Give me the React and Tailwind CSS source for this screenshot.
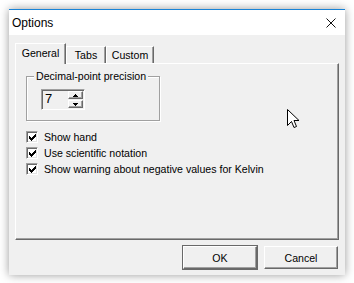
import { useState } from 'react'

// Classic "Options" dialog: title bar, tab strip, one tab page, OK/Cancel.

const raised =
  'border border-t-white border-l-white border-r-[#696969] border-b-[#696969] shadow-[inset_-1px_-1px_0_#a0a0a0]'

function CloseGlyph() {
  return (
    <svg width="10" height="10" viewBox="0 0 10 10" className="block">
      <path d="M0.5 0.5 L9.5 9.5 M9.5 0.5 L0.5 9.5" stroke="#111" strokeWidth="1" fill="none" />
    </svg>
  )
}

function Tab({ label, width, active, onClick }) {
  if (active) {
    return (
      <div
        onClick={onClick}
        className="relative z-10 -mb-px h-[21px] bg-[#f0f0f0] border-t border-l border-r border-t-white border-l-white border-r-[#696969] shadow-[inset_-1px_0_0_#a0a0a0] flex justify-center pt-[2px]"
        style={{ width }}
      >
        {label}
      </div>
    )
  }
  return (
    <div
      onClick={onClick}
      className="h-[17px] bg-[#f0f0f0] border-t border-l border-r border-t-white border-l-white border-r-[#696969] shadow-[inset_-1px_0_0_#a0a0a0] flex justify-center pt-[1px] cursor-default"
      style={{ width }}
    >
      {label}
    </div>
  )
}

// classic 7x7 tick, three pixels tall per column
const TICK = [
  [0, 2], [1, 3], [2, 4], [3, 3], [4, 2], [5, 1], [6, 0],
]

function CheckBox({ label, checked, onToggle }) {
  return (
    <div className="h-[16px] flex items-center gap-[6px]" onClick={onToggle}>
      <div className="w-[12px] h-[12px] bg-white border border-t-[#a0a0a0] border-l-[#a0a0a0] border-r-white border-b-white shadow-[inset_1px_1px_0_#696969,inset_-1px_-1px_0_#e3e3e3] flex items-center justify-center pl-px pt-px">
        {checked && (
          <svg width="7" height="7" viewBox="0 0 7 7" className="block">
            {TICK.map(([x, y]) => (
              <rect key={x} x={x} y={y} width="1" height="3" fill="#000" />
            ))}
          </svg>
        )}
      </div>
      <span>{label}</span>
    </div>
  )
}

function Spinner({ value }) {
  return (
    <div className="w-[44px] h-[21px] bg-[#f0f0f0] border border-t-[#a0a0a0] border-l-[#a0a0a0] border-r-white border-b-white shadow-[inset_1px_1px_0_#696969] flex">
      <div className="flex-1 pl-[3px] pt-[1px] text-[13px] leading-[16px]">{value}</div>
      <div className="w-[16px] flex flex-col pr-[1px] py-px gap-px">
        <div className={`h-[9px] bg-[#f0f0f0] ${raised} flex items-center justify-center`}>
          <svg width="5" height="3" viewBox="0 0 5 3" className="block">
            <path d="M2 0h1v1h1v1h1v1H0V2h1V1h1z" fill="#000" />
          </svg>
        </div>
        <div className={`h-[9px] bg-[#f0f0f0] ${raised} flex items-center justify-center`}>
          <svg width="5" height="3" viewBox="0 0 5 3" className="block">
            <path d="M0 0h5v1H4v1H3v1H2V2H1V1H0z" fill="#000" />
          </svg>
        </div>
      </div>
    </div>
  )
}

function Cursor() {
  return (
    <svg
      width="13"
      height="20"
      viewBox="0 0 13 20"
      className="absolute left-[287px] top-[109px]"
    >
      <path
        d="M0.5 0.5 L0.5 16.5 L4.5 12.5 L7 18.5 L9.5 17.5 L7 11.5 L12 11.5 Z"
        fill="#fff"
        stroke="#000"
        strokeWidth="1"
      />
    </svg>
  )
}

export default function App() {
  const [tab, setTab] = useState('general')
  const [checks, setChecks] = useState({ hand: true, sci: true, kelvin: true })
  const toggle = (k) => setChecks((c) => ({ ...c, [k]: !c[k] }))

  return (
    <div className="relative w-[354px] h-[283px] bg-white overflow-hidden font-['Liberation_Sans',Arial,sans-serif] text-[10.6px] leading-[14px] text-black select-none">
      <div className="ml-[9px] mt-[9px] w-[336px] h-[266px] flex flex-col bg-[#f0f0f0] border-t border-t-[#1883d7] shadow-[0_0_9px_rgba(0,0,0,0.4)]">
        {/* title bar */}
        <div className="h-[25px] bg-white flex items-center justify-between pl-[3px] pr-[9px]">
          <span className="text-[12px] leading-[16px] pt-[1px]">Options</span>
          <CloseGlyph />
        </div>

        <div className="flex-1 flex flex-col px-[6px] pt-[8px]">
          {/* tab strip */}
          <div className="h-[20px] flex items-end">
            <Tab label="General" width={51} active={tab === 'general'} onClick={() => setTab('general')} />
            <Tab label="Tabs" width={40} active={tab === 'tabs'} onClick={() => setTab('tabs')} />
            <Tab label="Custom" width={48} active={tab === 'custom'} onClick={() => setTab('custom')} />
          </div>

          {/* tab page */}
          <div className={`h-[177px] ${raised} flex flex-col pl-[10px]`}>
            <div className="relative mt-[12px] w-[134px] h-[45px] border border-[#a0a0a0] shadow-[inset_1px_1px_0_#fff,1px_1px_0_#fff] pl-[14px] pt-[12px]">
              <span className="absolute left-[7px] top-[-8px] px-[2px] bg-[#f0f0f0]">
                Decimal-point precision
              </span>
              <Spinner value="7" />
            </div>

            <div className="mt-[8px] flex flex-col">
              <CheckBox label="Show hand" checked={checks.hand} onToggle={() => toggle('hand')} />
              <CheckBox label="Use scientific notation" checked={checks.sci} onToggle={() => toggle('sci')} />
              <CheckBox
                label="Show warning about negative values for Kelvin"
                checked={checks.kelvin}
                onToggle={() => toggle('kelvin')}
              />
            </div>
          </div>

          {/* buttons */}
          <div className="mt-[6px] flex justify-end gap-[7px] pr-px">
            <button
              type="button"
              className={`w-[74px] h-[23px] bg-[#f0f0f0] ${raised} outline outline-1 outline-[#696969] flex items-center justify-center`}
            >
              OK
            </button>
            <button
              type="button"
              className={`w-[74px] h-[23px] bg-[#f0f0f0] ${raised} flex items-center justify-center`}
            >
              Cancel
            </button>
          </div>
        </div>
      </div>
      <Cursor />
    </div>
  )
}
